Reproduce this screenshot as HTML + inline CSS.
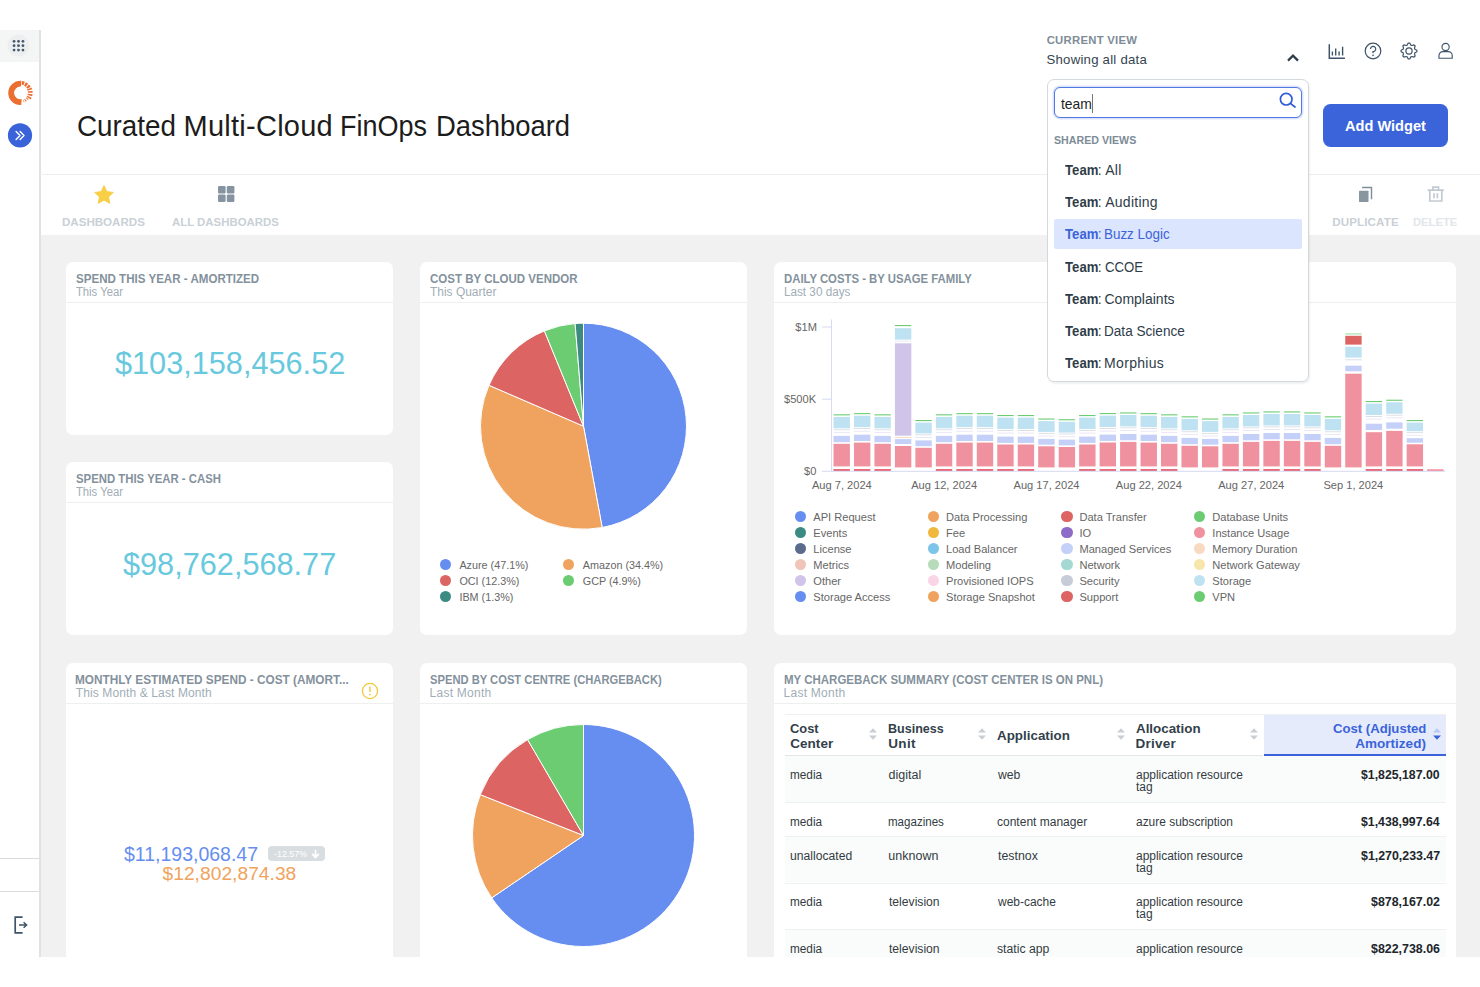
<!DOCTYPE html>
<html><head><meta charset="utf-8"><title>Curated Multi-Cloud FinOps Dashboard</title><style>
html,body{margin:0;padding:0;background:#fff;}
body{width:1480px;height:987px;position:relative;overflow:hidden;font-family:"Liberation Sans",sans-serif;}
.t{position:absolute;white-space:nowrap;display:block;transform-origin:0 0;}
.b{position:absolute;box-sizing:border-box;}
svg{position:absolute;overflow:visible;}
.card{position:absolute;background:#fff;border-radius:6px;box-sizing:border-box;}
</style></head><body>
<div class="b" style="left:0px;top:30px;width:1480px;height:927px;background:#fff;"></div>
<div class="b" style="left:40px;top:235.2px;width:1440px;height:721.8px;background:#f1f1f1;"></div>
<div class="b" style="left:0px;top:30px;width:39px;height:32px;background:#f4f5f5;"></div>
<div class="b" style="left:39.1px;top:30px;width:1.6px;height:927px;background:#e1e1e1;"></div>
<div class="b" style="left:0px;top:858px;width:39px;height:1px;background:#dcdcdc;"></div>
<div class="b" style="left:0px;top:891px;width:39px;height:1px;background:#dcdcdc;"></div>
<div class="b" style="left:40px;top:174px;width:1440px;height:1px;background:#eeeeee;"></div>
<svg style="left:7.35px;top:33.9px" width="23" height="23" viewBox="0 0 23 23"><circle cx="11.5" cy="11.5" r="11" fill="#eceeef"/><circle cx="7.05" cy="7.30" r="1.4" fill="#44596d"/><circle cx="7.05" cy="11.70" r="1.4" fill="#44596d"/><circle cx="7.05" cy="16.10" r="1.4" fill="#44596d"/><circle cx="11.50" cy="7.30" r="1.4" fill="#44596d"/><circle cx="11.50" cy="11.70" r="1.4" fill="#44596d"/><circle cx="11.50" cy="16.10" r="1.4" fill="#44596d"/><circle cx="15.95" cy="7.30" r="1.4" fill="#44596d"/><circle cx="15.95" cy="11.70" r="1.4" fill="#44596d"/><circle cx="15.95" cy="16.10" r="1.4" fill="#44596d"/></svg>
<svg style="left:8.0px;top:80.0px" width="26" height="26" viewBox="0 0 26 26"><path d="M13.19 24.97 A12.1 12.1 0 1 1 13.40 0.85 L12.90 6.62 A6.3 6.3 0 1 0 13.77 19.04 Z" fill="#ea6f31"/><path d="M13.93 2.92 A10.1 10.1 0 0 1 21.27 8.16" fill="none" stroke="#ea6f31" stroke-width="3.9" stroke-dasharray="2.3 0.9"/><path d="M21.25 8.56 A9.9 9.9 0 0 1 20.75 18.15" fill="none" stroke="#ea6f31" stroke-width="4.8" stroke-dasharray="1.5 1.3"/><path d="M19.55 18.13 A8.9 8.9 0 0 1 15.39 21.26" fill="none" stroke="#ea6f31" stroke-width="2.8" stroke-dasharray="1.2 1.1" opacity="0.85"/></svg>
<svg style="left:8.1px;top:122.5px" width="24" height="24.5" viewBox="0 0 24 24.5"><circle cx="12" cy="12.4" r="12.1" fill="#3b63d9"/><path d="M8.1 8.5 L12 12.45 L8.1 16.4 M12.1 8.5 L16 12.45 L12.1 16.4" fill="none" stroke="#fff" stroke-width="1.4" stroke-linecap="round" stroke-linejoin="round"/></svg>
<svg style="left:13.5px;top:915.7px" width="15" height="18" viewBox="0 0 15 18"><path d="M8.6 1.2 H1.2 V16.8 H8.6" fill="none" stroke="#3f5468" stroke-width="1.7"/><path d="M5 9 H12.4 M9.6 6.2 L12.6 9 L9.6 11.8" fill="none" stroke="#3f5468" stroke-width="1.5"/></svg>
<span class="t" style="left:77.31px;top:112.00px;font-size:29px;line-height:29px;color:#1c1c1c;transform:scaleX(0.9589);">Curated</span>
<span class="t" style="left:183.58px;top:112.00px;font-size:29px;line-height:29px;color:#1c1c1c;letter-spacing:0.247px;">Multi-Cloud</span>
<span class="t" style="left:340.44px;top:112.00px;font-size:29px;line-height:29px;color:#1c1c1c;transform:scaleX(0.9314);">FinOps</span>
<span class="t" style="left:436.31px;top:112.00px;font-size:29px;line-height:29px;color:#1c1c1c;transform:scaleX(0.9452);">Dashboard</span>
<span class="t" style="left:1046.65px;top:35.00px;font-size:11.3px;line-height:11.3px;color:#7d8c97;font-weight:700;letter-spacing:0.287px;">CURRENT VIEW</span>
<span class="t" style="left:1046.51px;top:53.00px;font-size:13.2px;line-height:13.2px;color:#34444f;letter-spacing:0.234px;">Showing all data</span>
<svg style="left:1285.8px;top:53.2px" width="14" height="10" viewBox="0 0 14 10"><path d="M2 7.6 L7 2.6 L12 7.6" fill="none" stroke="#2f3e4a" stroke-width="2.2"/></svg>
<svg style="left:1327px;top:42px" width="20" height="20" viewBox="0 0 20 20"><path d="M2.3 2.3 V16.2 H17.9" fill="none" stroke="#3f5468" stroke-width="1.5"/><path d="M5.4 9.4 V13.4 M8.7 6.4 V13.4 M12.1 9.4 V13.4 M15.6 4.8 V13.4" stroke="#3f5468" stroke-width="1.4" fill="none"/></svg>
<svg style="left:1364.1px;top:42.3px" width="18" height="18" viewBox="0 0 18 18"><circle cx="9" cy="9" r="7.8" fill="none" stroke="#3f5468" stroke-width="1.2"/><path d="M6.5 7 A2.6 2.6 0 1 1 9 9.6 V11.2" fill="none" stroke="#3f5468" stroke-width="1.2"/><circle cx="9" cy="13.4" r="0.8" fill="#3f5468"/></svg>
<svg style="left:1400.4px;top:42.1px" width="18" height="18" viewBox="0 0 18 18"><path d="M16.91,8.22 L16.91,9.78 L14.93,10.80 L14.47,11.92 L15.15,14.04 L14.04,15.15 L11.92,14.47 L10.80,14.93 L9.78,16.91 L8.22,16.91 L7.20,14.93 L6.08,14.47 L3.96,15.15 L2.85,14.04 L3.53,11.92 L3.07,10.80 L1.09,9.78 L1.09,8.22 L3.07,7.20 L3.53,6.08 L2.85,3.96 L3.96,2.85 L6.08,3.53 L7.20,3.07 L8.22,1.09 L9.78,1.09 L10.80,3.07 L11.92,3.53 L14.04,2.85 L15.15,3.96 L14.47,6.08 L14.93,7.20Z" fill="none" stroke="#3f5468" stroke-width="1.2" stroke-linejoin="round"/><circle cx="9" cy="9" r="3.1" fill="none" stroke="#3f5468" stroke-width="1.2"/></svg>
<svg style="left:1437.7px;top:42.2px" width="15.2" height="17.6" viewBox="0 0 16 18"><circle cx="8" cy="5" r="3.8" fill="none" stroke="#3f5468" stroke-width="1.2"/><path d="M1 16.8 V14.2 C1 11.4 3.2 9.8 5 9.8 H11 C12.8 9.8 15 11.4 15 14.2 V16.8 Z" fill="none" stroke="#3f5468" stroke-width="1.2" stroke-linejoin="round"/></svg>
<div class="b" style="left:1323px;top:103.8px;width:125px;height:43px;background:#3c64da;border-radius:7.5px;"></div>
<span class="t" style="left:1344.74px;top:118.00px;font-size:15.5px;line-height:15.5px;color:#fff;font-weight:700;transform:scaleX(0.9405);">Add Widget</span>
<svg style="left:94px;top:185px" width="20" height="19" viewBox="0 0 20 19"><path d="M10 0.6 L12.9 6.6 L19.4 7.4 L14.6 11.9 L15.9 18.4 L10 15.2 L4.1 18.4 L5.4 11.9 L0.6 7.4 L7.1 6.6 Z" fill="#f7ce45" stroke="#f7ce45" stroke-width="0.8" stroke-linejoin="round"/></svg>
<svg style="left:217.9px;top:186px" width="17" height="16" viewBox="0 0 17 16"><rect x="0" y="0" width="7.6" height="7.4" rx="1.2" fill="#8594a0"/><rect x="8.8" y="0" width="7.6" height="7.4" rx="1.2" fill="#8594a0"/><rect x="0" y="8.6" width="7.6" height="7.4" rx="1.2" fill="#8594a0"/><rect x="8.8" y="8.6" width="7.6" height="7.4" rx="1.2" fill="#8594a0"/></svg>
<span class="t" style="left:62.05px;top:216.00px;font-size:11.6px;line-height:11.6px;color:#c9d0d6;font-weight:700;transform:scaleX(0.9969);">DASHBOARDS</span>
<span class="t" style="left:172.31px;top:216.00px;font-size:11.6px;line-height:11.6px;color:#c9d0d6;font-weight:700;transform:scaleX(0.9834);">ALL DASHBOARDS</span>
<svg style="left:1358px;top:186px" width="16" height="17" viewBox="0 0 16 17"><path d="M4.1 1.5 H13.5 V13.2" fill="none" stroke="#7f8e99" stroke-width="1.4"/><rect x="1" y="4.7" width="9.5" height="11.2" rx="0.6" fill="#8896a0"/></svg>
<span class="t" style="left:1332.15px;top:216.00px;font-size:11.6px;line-height:11.6px;color:#c9d0d6;font-weight:700;letter-spacing:0.135px;">DUPLICATE</span>
<svg style="left:1427px;top:186px" width="18" height="17" viewBox="0 0 18 17"><path d="M0.6 4.1 H16.8 M5.9 3.4 V1.2 H11.5 V3.4 M2.8 4.6 V15 H14.8 V4.6 M7 7.2 V12.2 M10.4 7.2 V12.2" fill="none" stroke="#c2cad1" stroke-width="1.7"/></svg>
<span class="t" style="left:1413.47px;top:216.00px;font-size:11.6px;line-height:11.6px;color:#e2e6e9;font-weight:700;transform:scaleX(0.9663);">DELETE</span>
<div class="card" style="left:65.5px;top:262px;width:327px;height:172.8px;border-radius:7px;"></div>
<span class="t" style="left:75.71px;top:273.00px;font-size:12.3px;line-height:12.3px;color:#83919c;font-weight:700;transform:scaleX(0.9406);">SPEND THIS YEAR - AMORTIZED</span>
<span class="t" style="left:75.78px;top:286.00px;font-size:12px;line-height:12px;color:#a1adb6;transform:scaleX(0.9371);">This Year</span>
<div class="b" style="left:65.5px;top:302.3px;width:327px;height:1px;background:#eef0f0;"></div>
<span class="t" style="left:114.84px;top:348.00px;font-size:31px;line-height:31px;color:#68c9de;transform:scaleX(0.9894);">$103,158,456.52</span>
<div class="card" style="left:65.5px;top:462px;width:327px;height:173px;border-radius:7px;"></div>
<span class="t" style="left:75.72px;top:473.00px;font-size:12.3px;line-height:12.3px;color:#83919c;font-weight:700;transform:scaleX(0.9240);">SPEND THIS YEAR - CASH</span>
<span class="t" style="left:75.78px;top:486.00px;font-size:12px;line-height:12px;color:#a1adb6;transform:scaleX(0.9371);">This Year</span>
<div class="b" style="left:65.5px;top:502.3px;width:327px;height:1px;background:#eef0f0;"></div>
<span class="t" style="left:123.24px;top:549.00px;font-size:31px;line-height:31px;color:#68c9de;transform:scaleX(0.9895);">$98,762,568.77</span>
<div class="card" style="left:420px;top:262px;width:327px;height:373px;border-radius:7px;"></div>
<span class="t" style="left:430.04px;top:273.00px;font-size:12.3px;line-height:12.3px;color:#83919c;font-weight:700;transform:scaleX(0.9366);">COST BY CLOUD VENDOR</span>
<span class="t" style="left:430.26px;top:286.00px;font-size:12px;line-height:12px;color:#a1adb6;transform:scaleX(0.9955);">This Quarter</span>
<div class="b" style="left:420px;top:302.3px;width:327px;height:1px;background:#eef0f0;"></div>
<svg style="left:0;top:0" width="1480" height="987"><path d="M583.5,426.2 L583.50,323.20 A103,103 0 0 1 602.16,527.49 Z" fill="#668ef0" stroke="#fff" stroke-width="1" stroke-linejoin="round"/><path d="M583.5,426.2 L602.16,527.49 A103,103 0 0 1 488.97,385.29 Z" fill="#f0a35e" stroke="#fff" stroke-width="1" stroke-linejoin="round"/><path d="M583.5,426.2 L488.97,385.29 A103,103 0 0 1 544.38,330.92 Z" fill="#dc6463" stroke="#fff" stroke-width="1" stroke-linejoin="round"/><path d="M583.5,426.2 L544.38,330.92 A103,103 0 0 1 575.10,323.54 Z" fill="#6ccc72" stroke="#fff" stroke-width="1" stroke-linejoin="round"/><path d="M583.5,426.2 L575.10,323.54 A103,103 0 0 1 583.50,323.20 Z" fill="#3c8b83" stroke="#fff" stroke-width="1" stroke-linejoin="round"/></svg>
<div class="b" style="left:440.10px;top:559.10px;width:11.2px;height:11.2px;border-radius:50%;background:#668ef0;"></div>
<span class="t" style="left:459.40px;top:560.00px;font-size:10.8px;line-height:10.8px;color:#666;">Azure (47.1%)</span>
<div class="b" style="left:440.10px;top:575.10px;width:11.2px;height:11.2px;border-radius:50%;background:#dc6463;"></div>
<span class="t" style="left:459.40px;top:576.00px;font-size:10.8px;line-height:10.8px;color:#666;">OCI (12.3%)</span>
<div class="b" style="left:440.10px;top:591.10px;width:11.2px;height:11.2px;border-radius:50%;background:#3c8b83;"></div>
<span class="t" style="left:459.40px;top:592.00px;font-size:10.8px;line-height:10.8px;color:#666;">IBM (1.3%)</span>
<div class="b" style="left:563.20px;top:559.10px;width:11.2px;height:11.2px;border-radius:50%;background:#f0a35e;"></div>
<span class="t" style="left:582.80px;top:560.00px;font-size:10.8px;line-height:10.8px;color:#666;">Amazon (34.4%)</span>
<div class="b" style="left:563.20px;top:575.10px;width:11.2px;height:11.2px;border-radius:50%;background:#6ccc72;"></div>
<span class="t" style="left:582.80px;top:576.00px;font-size:10.8px;line-height:10.8px;color:#666;">GCP (4.9%)</span>
<div class="card" style="left:774px;top:262px;width:682px;height:373px;border-radius:7px;"></div>
<span class="t" style="left:783.76px;top:273.00px;font-size:12.3px;line-height:12.3px;color:#83919c;font-weight:700;transform:scaleX(0.9222);">DAILY COSTS - BY USAGE FAMILY</span>
<span class="t" style="left:783.56px;top:286.00px;font-size:12px;line-height:12px;color:#a1adb6;transform:scaleX(0.9751);">Last 30 days</span>
<div class="b" style="left:774px;top:302.3px;width:682px;height:1px;background:#eef0f0;"></div>
<svg style="left:0;top:0" width="1480" height="987"><path d="M831.5 319.5 V471.3 H1445" fill="none" stroke="#d6daf2" stroke-width="1"/><path d="M822 327.0 H831.5" stroke="#d6daf2" stroke-width="1"/><path d="M822 399.2 H831.5" stroke="#d6daf2" stroke-width="1"/><path d="M822 471.3 H831.5" stroke="#d6daf2" stroke-width="1"/><rect x="833.50" y="469.00" width="16.4" height="1.90" fill="#e46a7c"/><rect x="833.50" y="443.80" width="16.4" height="22.60" fill="#f0919f"/><rect x="833.50" y="435.90" width="16.4" height="6.30" fill="#c5d0f8"/><rect x="833.50" y="429.30" width="16.4" height="0.90" fill="#d9dde4"/><rect x="833.50" y="431.90" width="16.4" height="1.00" fill="#ebe6f5"/><rect x="833.50" y="416.90" width="16.4" height="11.40" fill="#bfe2f2"/><rect x="833.50" y="414.30" width="16.4" height="1.10" fill="#6ccc72"/><rect x="853.97" y="469.00" width="16.4" height="1.90" fill="#e46a7c"/><rect x="853.97" y="442.60" width="16.4" height="23.80" fill="#f0919f"/><rect x="853.97" y="434.70" width="16.4" height="6.30" fill="#c5d0f8"/><rect x="853.97" y="428.10" width="16.4" height="0.90" fill="#d9dde4"/><rect x="853.97" y="430.70" width="16.4" height="1.00" fill="#ebe6f5"/><rect x="853.97" y="415.70" width="16.4" height="11.40" fill="#bfe2f2"/><rect x="853.97" y="413.10" width="16.4" height="1.10" fill="#6ccc72"/><rect x="874.44" y="469.00" width="16.4" height="1.90" fill="#e46a7c"/><rect x="874.44" y="443.80" width="16.4" height="22.60" fill="#f0919f"/><rect x="874.44" y="435.90" width="16.4" height="6.30" fill="#c5d0f8"/><rect x="874.44" y="429.30" width="16.4" height="0.90" fill="#d9dde4"/><rect x="874.44" y="431.90" width="16.4" height="1.00" fill="#ebe6f5"/><rect x="874.44" y="416.90" width="16.4" height="11.40" fill="#bfe2f2"/><rect x="874.44" y="414.30" width="16.4" height="1.10" fill="#6ccc72"/><rect x="894.91" y="446.00" width="16.4" height="21.40" fill="#f0919f"/><rect x="894.91" y="439.10" width="16.4" height="4.90" fill="#c5d0f8"/><rect x="894.91" y="437.20" width="16.4" height="0.70" fill="#f6cfa8"/><rect x="894.91" y="343.30" width="16.4" height="92.40" fill="#d1c4e9"/><rect x="894.91" y="340.60" width="16.4" height="1.00" fill="#e8ecf2"/><rect x="894.91" y="328.20" width="16.4" height="11.40" fill="#bfe2f2"/><rect x="894.91" y="325.00" width="16.4" height="1.10" fill="#6ccc72"/><rect x="915.38" y="447.80" width="16.4" height="19.60" fill="#f0919f"/><rect x="915.38" y="440.40" width="16.4" height="5.80" fill="#c5d0f8"/><rect x="915.38" y="434.40" width="16.4" height="0.90" fill="#d9dde4"/><rect x="915.38" y="437.00" width="16.4" height="1.00" fill="#ebe6f5"/><rect x="915.38" y="422.60" width="16.4" height="10.80" fill="#bfe2f2"/><rect x="915.38" y="420.00" width="16.4" height="1.10" fill="#6ccc72"/><rect x="935.85" y="469.00" width="16.4" height="1.90" fill="#e46a7c"/><rect x="935.85" y="443.80" width="16.4" height="22.60" fill="#f0919f"/><rect x="935.85" y="435.90" width="16.4" height="6.30" fill="#c5d0f8"/><rect x="935.85" y="429.30" width="16.4" height="0.90" fill="#d9dde4"/><rect x="935.85" y="431.90" width="16.4" height="1.00" fill="#ebe6f5"/><rect x="935.85" y="416.90" width="16.4" height="11.40" fill="#bfe2f2"/><rect x="935.85" y="414.30" width="16.4" height="1.10" fill="#6ccc72"/><rect x="956.32" y="469.00" width="16.4" height="1.90" fill="#e46a7c"/><rect x="956.32" y="442.60" width="16.4" height="23.80" fill="#f0919f"/><rect x="956.32" y="434.70" width="16.4" height="6.30" fill="#c5d0f8"/><rect x="956.32" y="428.10" width="16.4" height="0.90" fill="#d9dde4"/><rect x="956.32" y="430.70" width="16.4" height="1.00" fill="#ebe6f5"/><rect x="956.32" y="415.70" width="16.4" height="11.40" fill="#bfe2f2"/><rect x="956.32" y="413.10" width="16.4" height="1.10" fill="#6ccc72"/><rect x="976.79" y="469.00" width="16.4" height="1.90" fill="#e46a7c"/><rect x="976.79" y="442.60" width="16.4" height="23.80" fill="#f0919f"/><rect x="976.79" y="434.70" width="16.4" height="6.30" fill="#c5d0f8"/><rect x="976.79" y="428.10" width="16.4" height="0.90" fill="#d9dde4"/><rect x="976.79" y="430.70" width="16.4" height="1.00" fill="#ebe6f5"/><rect x="976.79" y="415.70" width="16.4" height="11.40" fill="#bfe2f2"/><rect x="976.79" y="413.10" width="16.4" height="1.10" fill="#6ccc72"/><rect x="997.26" y="469.00" width="16.4" height="1.90" fill="#e46a7c"/><rect x="997.26" y="444.50" width="16.4" height="21.90" fill="#f0919f"/><rect x="997.26" y="436.60" width="16.4" height="6.30" fill="#c5d0f8"/><rect x="997.26" y="430.00" width="16.4" height="0.90" fill="#d9dde4"/><rect x="997.26" y="432.60" width="16.4" height="1.00" fill="#ebe6f5"/><rect x="997.26" y="417.60" width="16.4" height="11.40" fill="#bfe2f2"/><rect x="997.26" y="415.00" width="16.4" height="1.10" fill="#6ccc72"/><rect x="1017.73" y="469.00" width="16.4" height="1.90" fill="#e46a7c"/><rect x="1017.73" y="444.50" width="16.4" height="21.90" fill="#f0919f"/><rect x="1017.73" y="436.60" width="16.4" height="6.30" fill="#c5d0f8"/><rect x="1017.73" y="430.00" width="16.4" height="0.90" fill="#d9dde4"/><rect x="1017.73" y="432.60" width="16.4" height="1.00" fill="#ebe6f5"/><rect x="1017.73" y="417.60" width="16.4" height="11.40" fill="#bfe2f2"/><rect x="1017.73" y="415.00" width="16.4" height="1.10" fill="#6ccc72"/><rect x="1038.20" y="446.30" width="16.4" height="21.10" fill="#f0919f"/><rect x="1038.20" y="438.90" width="16.4" height="5.80" fill="#c5d0f8"/><rect x="1038.20" y="432.90" width="16.4" height="0.90" fill="#d9dde4"/><rect x="1038.20" y="435.50" width="16.4" height="1.00" fill="#ebe6f5"/><rect x="1038.20" y="421.10" width="16.4" height="10.80" fill="#bfe2f2"/><rect x="1038.20" y="418.50" width="16.4" height="1.10" fill="#6ccc72"/><rect x="1058.67" y="447.00" width="16.4" height="20.40" fill="#f0919f"/><rect x="1058.67" y="439.60" width="16.4" height="5.80" fill="#c5d0f8"/><rect x="1058.67" y="433.60" width="16.4" height="0.90" fill="#d9dde4"/><rect x="1058.67" y="436.20" width="16.4" height="1.00" fill="#ebe6f5"/><rect x="1058.67" y="421.80" width="16.4" height="10.80" fill="#bfe2f2"/><rect x="1058.67" y="419.20" width="16.4" height="1.10" fill="#6ccc72"/><rect x="1079.14" y="469.00" width="16.4" height="1.90" fill="#e46a7c"/><rect x="1079.14" y="444.50" width="16.4" height="21.90" fill="#f0919f"/><rect x="1079.14" y="436.60" width="16.4" height="6.30" fill="#c5d0f8"/><rect x="1079.14" y="430.00" width="16.4" height="0.90" fill="#d9dde4"/><rect x="1079.14" y="432.60" width="16.4" height="1.00" fill="#ebe6f5"/><rect x="1079.14" y="417.60" width="16.4" height="11.40" fill="#bfe2f2"/><rect x="1079.14" y="415.00" width="16.4" height="1.10" fill="#6ccc72"/><rect x="1099.61" y="469.00" width="16.4" height="1.90" fill="#e46a7c"/><rect x="1099.61" y="442.50" width="16.4" height="23.90" fill="#f0919f"/><rect x="1099.61" y="434.60" width="16.4" height="6.30" fill="#c5d0f8"/><rect x="1099.61" y="428.00" width="16.4" height="0.90" fill="#d9dde4"/><rect x="1099.61" y="430.60" width="16.4" height="1.00" fill="#ebe6f5"/><rect x="1099.61" y="415.60" width="16.4" height="11.40" fill="#bfe2f2"/><rect x="1099.61" y="413.00" width="16.4" height="1.10" fill="#6ccc72"/><rect x="1120.08" y="469.00" width="16.4" height="1.90" fill="#e46a7c"/><rect x="1120.08" y="441.90" width="16.4" height="24.50" fill="#f0919f"/><rect x="1120.08" y="434.00" width="16.4" height="6.30" fill="#c5d0f8"/><rect x="1120.08" y="427.40" width="16.4" height="0.90" fill="#d9dde4"/><rect x="1120.08" y="430.00" width="16.4" height="1.00" fill="#ebe6f5"/><rect x="1120.08" y="415.00" width="16.4" height="11.40" fill="#bfe2f2"/><rect x="1120.08" y="412.40" width="16.4" height="1.10" fill="#6ccc72"/><rect x="1140.55" y="469.00" width="16.4" height="1.90" fill="#e46a7c"/><rect x="1140.55" y="442.60" width="16.4" height="23.80" fill="#f0919f"/><rect x="1140.55" y="434.70" width="16.4" height="6.30" fill="#c5d0f8"/><rect x="1140.55" y="428.10" width="16.4" height="0.90" fill="#d9dde4"/><rect x="1140.55" y="430.70" width="16.4" height="1.00" fill="#ebe6f5"/><rect x="1140.55" y="415.70" width="16.4" height="11.40" fill="#bfe2f2"/><rect x="1140.55" y="413.10" width="16.4" height="1.10" fill="#6ccc72"/><rect x="1161.02" y="469.00" width="16.4" height="1.90" fill="#e46a7c"/><rect x="1161.02" y="443.80" width="16.4" height="22.60" fill="#f0919f"/><rect x="1161.02" y="435.90" width="16.4" height="6.30" fill="#c5d0f8"/><rect x="1161.02" y="429.30" width="16.4" height="0.90" fill="#d9dde4"/><rect x="1161.02" y="431.90" width="16.4" height="1.00" fill="#ebe6f5"/><rect x="1161.02" y="416.90" width="16.4" height="11.40" fill="#bfe2f2"/><rect x="1161.02" y="414.30" width="16.4" height="1.10" fill="#6ccc72"/><rect x="1181.49" y="445.80" width="16.4" height="21.60" fill="#f0919f"/><rect x="1181.49" y="437.90" width="16.4" height="6.30" fill="#c5d0f8"/><rect x="1181.49" y="431.30" width="16.4" height="0.90" fill="#d9dde4"/><rect x="1181.49" y="433.90" width="16.4" height="1.00" fill="#ebe6f5"/><rect x="1181.49" y="418.90" width="16.4" height="11.40" fill="#bfe2f2"/><rect x="1181.49" y="416.30" width="16.4" height="1.10" fill="#6ccc72"/><rect x="1201.96" y="446.30" width="16.4" height="21.10" fill="#f0919f"/><rect x="1201.96" y="438.90" width="16.4" height="5.80" fill="#c5d0f8"/><rect x="1201.96" y="432.90" width="16.4" height="0.90" fill="#d9dde4"/><rect x="1201.96" y="435.50" width="16.4" height="1.00" fill="#ebe6f5"/><rect x="1201.96" y="421.10" width="16.4" height="10.80" fill="#bfe2f2"/><rect x="1201.96" y="418.50" width="16.4" height="1.10" fill="#6ccc72"/><rect x="1222.43" y="469.00" width="16.4" height="1.90" fill="#e46a7c"/><rect x="1222.43" y="443.80" width="16.4" height="22.60" fill="#f0919f"/><rect x="1222.43" y="435.90" width="16.4" height="6.30" fill="#c5d0f8"/><rect x="1222.43" y="429.30" width="16.4" height="0.90" fill="#d9dde4"/><rect x="1222.43" y="431.90" width="16.4" height="1.00" fill="#ebe6f5"/><rect x="1222.43" y="416.90" width="16.4" height="11.40" fill="#bfe2f2"/><rect x="1222.43" y="414.30" width="16.4" height="1.10" fill="#6ccc72"/><rect x="1242.90" y="469.00" width="16.4" height="1.90" fill="#e46a7c"/><rect x="1242.90" y="441.90" width="16.4" height="24.50" fill="#f0919f"/><rect x="1242.90" y="434.00" width="16.4" height="6.30" fill="#c5d0f8"/><rect x="1242.90" y="427.40" width="16.4" height="0.90" fill="#d9dde4"/><rect x="1242.90" y="430.00" width="16.4" height="1.00" fill="#ebe6f5"/><rect x="1242.90" y="415.00" width="16.4" height="11.40" fill="#bfe2f2"/><rect x="1242.90" y="412.40" width="16.4" height="1.10" fill="#6ccc72"/><rect x="1263.37" y="469.00" width="16.4" height="1.90" fill="#e46a7c"/><rect x="1263.37" y="440.90" width="16.4" height="25.50" fill="#f0919f"/><rect x="1263.37" y="433.00" width="16.4" height="6.30" fill="#c5d0f8"/><rect x="1263.37" y="426.40" width="16.4" height="0.90" fill="#d9dde4"/><rect x="1263.37" y="429.00" width="16.4" height="1.00" fill="#ebe6f5"/><rect x="1263.37" y="414.00" width="16.4" height="11.40" fill="#bfe2f2"/><rect x="1263.37" y="411.40" width="16.4" height="1.10" fill="#6ccc72"/><rect x="1283.84" y="469.00" width="16.4" height="1.90" fill="#e46a7c"/><rect x="1283.84" y="440.90" width="16.4" height="25.50" fill="#f0919f"/><rect x="1283.84" y="433.00" width="16.4" height="6.30" fill="#c5d0f8"/><rect x="1283.84" y="426.40" width="16.4" height="0.90" fill="#d9dde4"/><rect x="1283.84" y="429.00" width="16.4" height="1.00" fill="#ebe6f5"/><rect x="1283.84" y="414.00" width="16.4" height="11.40" fill="#bfe2f2"/><rect x="1283.84" y="411.40" width="16.4" height="1.10" fill="#6ccc72"/><rect x="1304.31" y="469.00" width="16.4" height="1.90" fill="#e46a7c"/><rect x="1304.31" y="441.90" width="16.4" height="24.50" fill="#f0919f"/><rect x="1304.31" y="434.00" width="16.4" height="6.30" fill="#c5d0f8"/><rect x="1304.31" y="427.40" width="16.4" height="0.90" fill="#d9dde4"/><rect x="1304.31" y="430.00" width="16.4" height="1.00" fill="#ebe6f5"/><rect x="1304.31" y="415.00" width="16.4" height="11.40" fill="#bfe2f2"/><rect x="1304.31" y="412.40" width="16.4" height="1.10" fill="#6ccc72"/><rect x="1324.78" y="445.80" width="16.4" height="21.60" fill="#f0919f"/><rect x="1324.78" y="437.90" width="16.4" height="6.30" fill="#c5d0f8"/><rect x="1324.78" y="431.30" width="16.4" height="0.90" fill="#d9dde4"/><rect x="1324.78" y="433.90" width="16.4" height="1.00" fill="#ebe6f5"/><rect x="1324.78" y="418.90" width="16.4" height="11.40" fill="#bfe2f2"/><rect x="1324.78" y="416.30" width="16.4" height="1.10" fill="#6ccc72"/><rect x="1345.25" y="373.70" width="16.4" height="93.70" fill="#f0919f"/><rect x="1345.25" y="365.70" width="16.4" height="5.60" fill="#c5d0f8"/><rect x="1345.25" y="359.10" width="16.4" height="1.30" fill="#e3e6ee"/><rect x="1345.25" y="346.70" width="16.4" height="10.90" fill="#bfe2f2"/><rect x="1345.25" y="335.80" width="16.4" height="8.80" fill="#dc6463"/><rect x="1345.25" y="333.30" width="16.4" height="1.20" fill="#a5e2a8"/><rect x="1365.72" y="469.00" width="16.4" height="1.90" fill="#e46a7c"/><rect x="1365.72" y="432.20" width="16.4" height="34.20" fill="#f0919f"/><rect x="1365.72" y="423.70" width="16.4" height="6.30" fill="#c5d0f8"/><rect x="1365.72" y="416.00" width="16.4" height="0.90" fill="#d9dde4"/><rect x="1365.72" y="418.60" width="16.4" height="1.00" fill="#ebe6f5"/><rect x="1365.72" y="403.60" width="16.4" height="11.40" fill="#bfe2f2"/><rect x="1365.72" y="401.00" width="16.4" height="1.10" fill="#6ccc72"/><rect x="1386.19" y="469.00" width="16.4" height="1.90" fill="#e46a7c"/><rect x="1386.19" y="430.90" width="16.4" height="35.50" fill="#f0919f"/><rect x="1386.19" y="422.40" width="16.4" height="6.30" fill="#c5d0f8"/><rect x="1386.19" y="414.70" width="16.4" height="0.90" fill="#d9dde4"/><rect x="1386.19" y="417.30" width="16.4" height="1.00" fill="#ebe6f5"/><rect x="1386.19" y="402.30" width="16.4" height="11.40" fill="#bfe2f2"/><rect x="1386.19" y="399.70" width="16.4" height="1.10" fill="#6ccc72"/><rect x="1406.66" y="469.00" width="16.4" height="1.90" fill="#e46a7c"/><rect x="1406.66" y="444.30" width="16.4" height="22.10" fill="#f0919f"/><rect x="1406.66" y="438.20" width="16.4" height="4.50" fill="#c5d0f8"/><rect x="1406.66" y="432.20" width="16.4" height="0.90" fill="#d9dde4"/><rect x="1406.66" y="434.80" width="16.4" height="1.00" fill="#ebe6f5"/><rect x="1406.66" y="422.60" width="16.4" height="8.60" fill="#bfe2f2"/><rect x="1406.66" y="420.00" width="16.4" height="1.10" fill="#6ccc72"/><rect x="1427.13" y="469.20" width="16.4" height="1.80" fill="#f29aa8"/></svg>
<span class="t" style="left:795.30px;top:322.00px;font-size:11.1px;line-height:11.1px;color:#666;">$1M</span>
<span class="t" style="left:783.98px;top:394.00px;font-size:11.1px;line-height:11.1px;color:#666;">$500K</span>
<span class="t" style="left:804.07px;top:466.00px;font-size:11.1px;line-height:11.1px;color:#666;">$0</span>
<span class="t" style="left:811.90px;top:480.00px;font-size:11.1px;line-height:11.1px;color:#666;">Aug 7, 2024</span>
<span class="t" style="left:911.17px;top:480.00px;font-size:11.1px;line-height:11.1px;color:#666;">Aug 12, 2024</span>
<span class="t" style="left:1013.52px;top:480.00px;font-size:11.1px;line-height:11.1px;color:#666;">Aug 17, 2024</span>
<span class="t" style="left:1115.87px;top:480.00px;font-size:11.1px;line-height:11.1px;color:#666;">Aug 22, 2024</span>
<span class="t" style="left:1218.22px;top:480.00px;font-size:11.1px;line-height:11.1px;color:#666;">Aug 27, 2024</span>
<span class="t" style="left:1323.40px;top:480.00px;font-size:11.1px;line-height:11.1px;color:#666;">Sep 1, 2024</span>
<div class="b" style="left:794.90px;top:510.80px;width:11.2px;height:11.2px;border-radius:50%;background:#668ef0;"></div>
<span class="t" style="left:813.30px;top:512.00px;font-size:11.1px;line-height:11.1px;color:#666;">API Request</span>
<div class="b" style="left:794.90px;top:526.90px;width:11.2px;height:11.2px;border-radius:50%;background:#3c8b83;"></div>
<span class="t" style="left:813.30px;top:528.00px;font-size:11.1px;line-height:11.1px;color:#666;">Events</span>
<div class="b" style="left:794.90px;top:543.00px;width:11.2px;height:11.2px;border-radius:50%;background:#5c6b8c;"></div>
<span class="t" style="left:813.30px;top:544.00px;font-size:11.1px;line-height:11.1px;color:#666;">License</span>
<div class="b" style="left:794.90px;top:559.10px;width:11.2px;height:11.2px;border-radius:50%;background:#f0c5b8;"></div>
<span class="t" style="left:813.30px;top:560.00px;font-size:11.1px;line-height:11.1px;color:#666;">Metrics</span>
<div class="b" style="left:794.90px;top:575.20px;width:11.2px;height:11.2px;border-radius:50%;background:#d1c4e9;"></div>
<span class="t" style="left:813.30px;top:576.00px;font-size:11.1px;line-height:11.1px;color:#666;">Other</span>
<div class="b" style="left:794.90px;top:591.30px;width:11.2px;height:11.2px;border-radius:50%;background:#668ef0;"></div>
<span class="t" style="left:813.30px;top:592.00px;font-size:11.1px;line-height:11.1px;color:#666;">Storage Access</span>
<div class="b" style="left:928.00px;top:510.80px;width:11.2px;height:11.2px;border-radius:50%;background:#f0a35e;"></div>
<span class="t" style="left:946.00px;top:512.00px;font-size:11.1px;line-height:11.1px;color:#666;">Data Processing</span>
<div class="b" style="left:928.00px;top:526.90px;width:11.2px;height:11.2px;border-radius:50%;background:#f1b83e;"></div>
<span class="t" style="left:946.00px;top:528.00px;font-size:11.1px;line-height:11.1px;color:#666;">Fee</span>
<div class="b" style="left:928.00px;top:543.00px;width:11.2px;height:11.2px;border-radius:50%;background:#7cc4ea;"></div>
<span class="t" style="left:946.00px;top:544.00px;font-size:11.1px;line-height:11.1px;color:#666;">Load Balancer</span>
<div class="b" style="left:928.00px;top:559.10px;width:11.2px;height:11.2px;border-radius:50%;background:#b7dcb9;"></div>
<span class="t" style="left:946.00px;top:560.00px;font-size:11.1px;line-height:11.1px;color:#666;">Modeling</span>
<div class="b" style="left:928.00px;top:575.20px;width:11.2px;height:11.2px;border-radius:50%;background:#fad5e5;"></div>
<span class="t" style="left:946.00px;top:576.00px;font-size:11.1px;line-height:11.1px;color:#666;">Provisioned IOPS</span>
<div class="b" style="left:928.00px;top:591.30px;width:11.2px;height:11.2px;border-radius:50%;background:#f0a35e;"></div>
<span class="t" style="left:946.00px;top:592.00px;font-size:11.1px;line-height:11.1px;color:#666;">Storage Snapshot</span>
<div class="b" style="left:1061.40px;top:510.80px;width:11.2px;height:11.2px;border-radius:50%;background:#dc6463;"></div>
<span class="t" style="left:1079.40px;top:512.00px;font-size:11.1px;line-height:11.1px;color:#666;">Data Transfer</span>
<div class="b" style="left:1061.40px;top:526.90px;width:11.2px;height:11.2px;border-radius:50%;background:#8c6cc8;"></div>
<span class="t" style="left:1079.40px;top:528.00px;font-size:11.1px;line-height:11.1px;color:#666;">IO</span>
<div class="b" style="left:1061.40px;top:543.00px;width:11.2px;height:11.2px;border-radius:50%;background:#c5d0f8;"></div>
<span class="t" style="left:1079.40px;top:544.00px;font-size:11.1px;line-height:11.1px;color:#666;">Managed Services</span>
<div class="b" style="left:1061.40px;top:559.10px;width:11.2px;height:11.2px;border-radius:50%;background:#a3d9d2;"></div>
<span class="t" style="left:1079.40px;top:560.00px;font-size:11.1px;line-height:11.1px;color:#666;">Network</span>
<div class="b" style="left:1061.40px;top:575.20px;width:11.2px;height:11.2px;border-radius:50%;background:#c8ccd8;"></div>
<span class="t" style="left:1079.40px;top:576.00px;font-size:11.1px;line-height:11.1px;color:#666;">Security</span>
<div class="b" style="left:1061.40px;top:591.30px;width:11.2px;height:11.2px;border-radius:50%;background:#dc6463;"></div>
<span class="t" style="left:1079.40px;top:592.00px;font-size:11.1px;line-height:11.1px;color:#666;">Support</span>
<div class="b" style="left:1194.30px;top:510.80px;width:11.2px;height:11.2px;border-radius:50%;background:#6ccc72;"></div>
<span class="t" style="left:1212.30px;top:512.00px;font-size:11.1px;line-height:11.1px;color:#666;">Database Units</span>
<div class="b" style="left:1194.30px;top:526.90px;width:11.2px;height:11.2px;border-radius:50%;background:#f0919f;"></div>
<span class="t" style="left:1212.30px;top:528.00px;font-size:11.1px;line-height:11.1px;color:#666;">Instance Usage</span>
<div class="b" style="left:1194.30px;top:543.00px;width:11.2px;height:11.2px;border-radius:50%;background:#f8d9c2;"></div>
<span class="t" style="left:1212.30px;top:544.00px;font-size:11.1px;line-height:11.1px;color:#666;">Memory Duration</span>
<div class="b" style="left:1194.30px;top:559.10px;width:11.2px;height:11.2px;border-radius:50%;background:#f8e5aa;"></div>
<span class="t" style="left:1212.30px;top:560.00px;font-size:11.1px;line-height:11.1px;color:#666;">Network Gateway</span>
<div class="b" style="left:1194.30px;top:575.20px;width:11.2px;height:11.2px;border-radius:50%;background:#bfe2f2;"></div>
<span class="t" style="left:1212.30px;top:576.00px;font-size:11.1px;line-height:11.1px;color:#666;">Storage</span>
<div class="b" style="left:1194.30px;top:591.30px;width:11.2px;height:11.2px;border-radius:50%;background:#6ccc72;"></div>
<span class="t" style="left:1212.30px;top:592.00px;font-size:11.1px;line-height:11.1px;color:#666;">VPN</span>
<div class="card" style="left:65.5px;top:662.6px;width:327px;height:295px;border-radius:7px 7px 0 0;"></div>
<span class="t" style="left:75.23px;top:674.00px;font-size:12.3px;line-height:12.3px;color:#83919c;font-weight:700;transform:scaleX(0.9593);">MONTHLY ESTIMATED SPEND - COST (AMORT...</span>
<span class="t" style="left:75.76px;top:687.00px;font-size:12px;line-height:12px;color:#a1adb6;letter-spacing:0.117px;">This Month &amp; Last Month</span>
<div class="b" style="left:65.5px;top:702.9px;width:327px;height:1px;background:#eef0f0;"></div>
<svg style="left:361px;top:682px" width="18" height="18" viewBox="0 0 18 18"><circle cx="9" cy="9" r="7.6" fill="none" stroke="#f3c73c" stroke-width="1.3"/><path d="M9 4.6 V10" stroke="#f3c73c" stroke-width="1.4"/><circle cx="9" cy="12.6" r="0.9" fill="#f3c73c"/></svg>
<span class="t" style="left:124.41px;top:844.00px;font-size:20px;line-height:20px;color:#668ef0;transform:scaleX(0.9743);">$11,193,068.47</span>
<div class="b" style="left:268.1px;top:846.1px;width:56.6px;height:15.3px;background:#d8dde1;border-radius:4px;"></div>
<span class="t" style="left:274.24px;top:850.00px;font-size:9px;line-height:9px;color:#fff;transform:scaleX(0.9863);">-12.57%</span>
<svg style="left:311.2px;top:849px" width="9" height="10" viewBox="0 0 9 10"><path d="M4.5 0.8 V8 M1.2 5 L4.5 8.4 L7.8 5" fill="none" stroke="#fff" stroke-width="1.8"/></svg>
<span class="t" style="left:162.51px;top:864.00px;font-size:19.2px;line-height:19.2px;color:#f0a35e;letter-spacing:0.032px;">$12,802,874.38</span>
<div class="card" style="left:420px;top:662.6px;width:327px;height:295px;border-radius:7px 7px 0 0;"></div>
<span class="t" style="left:430.22px;top:674.00px;font-size:12.3px;line-height:12.3px;color:#83919c;font-weight:700;transform:scaleX(0.9101);">SPEND BY COST CENTRE (CHARGEBACK)</span>
<span class="t" style="left:429.54px;top:687.00px;font-size:12px;line-height:12px;color:#a1adb6;letter-spacing:0.260px;">Last Month</span>
<div class="b" style="left:420px;top:702.9px;width:327px;height:1px;background:#eef0f0;"></div>
<svg style="left:0;top:0" width="1480" height="987"><path d="M583.5,835.5 L583.50,724.50 A111,111 0 1 1 491.69,897.89 Z" fill="#668ef0" stroke="#fff" stroke-width="1" stroke-linejoin="round"/><path d="M583.5,835.5 L491.69,897.89 A111,111 0 0 1 480.29,794.64 Z" fill="#f0a35e" stroke="#fff" stroke-width="1" stroke-linejoin="round"/><path d="M583.5,835.5 L480.29,794.64 A111,111 0 0 1 527.60,739.60 Z" fill="#dc6463" stroke="#fff" stroke-width="1" stroke-linejoin="round"/><path d="M583.5,835.5 L527.60,739.60 A111,111 0 0 1 583.50,724.50 Z" fill="#6ccc72" stroke="#fff" stroke-width="1" stroke-linejoin="round"/></svg>
<div class="card" style="left:774px;top:662.7px;width:682px;height:295px;border-radius:7px 7px 0 0;"></div>
<span class="t" style="left:783.75px;top:674.00px;font-size:12.3px;line-height:12.3px;color:#83919c;font-weight:700;transform:scaleX(0.9344);">MY CHARGEBACK SUMMARY (COST CENTER IS ON PNL)</span>
<span class="t" style="left:783.54px;top:687.00px;font-size:12px;line-height:12px;color:#a1adb6;letter-spacing:0.260px;">Last Month</span>
<div class="b" style="left:774px;top:703.0px;width:682px;height:1px;background:#eef0f0;"></div>
<div class="b" style="left:784.8px;top:714.3px;width:661.2px;height:1px;background:#eef0f1;"></div>
<div class="b" style="left:784.8px;top:755.4px;width:478.7px;height:1px;background:#e4e7e9;"></div>
<div class="b" style="left:1263.5px;top:714.7px;width:182.5px;height:39.8px;background:#e5ebfb;"></div>
<div class="b" style="left:1263.5px;top:754.4px;width:182.5px;height:2px;background:#3b63d9;"></div>
<span class="t" style="left:790.19px;top:722.00px;font-size:13.5px;line-height:13.5px;color:#333f4a;font-weight:700;transform:scaleX(0.9536);">Cost</span>
<span class="t" style="left:790.16px;top:737.00px;font-size:13.5px;line-height:13.5px;color:#333f4a;font-weight:700;letter-spacing:0.070px;">Center</span>
<span class="t" style="left:888.18px;top:722.00px;font-size:13.5px;line-height:13.5px;color:#333f4a;font-weight:700;transform:scaleX(0.9291);">Business</span>
<span class="t" style="left:888.19px;top:737.00px;font-size:13.5px;line-height:13.5px;color:#333f4a;font-weight:700;letter-spacing:0.396px;">Unit</span>
<span class="t" style="left:997.47px;top:729.00px;font-size:13.5px;line-height:13.5px;color:#333f4a;font-weight:700;transform:scaleX(0.9909);">Application</span>
<span class="t" style="left:1135.97px;top:722.00px;font-size:13.5px;line-height:13.5px;color:#333f4a;font-weight:700;transform:scaleX(0.9903);">Allocation</span>
<span class="t" style="left:1135.42px;top:737.00px;font-size:13.5px;line-height:13.5px;color:#333f4a;font-weight:700;letter-spacing:0.253px;">Driver</span>
<span class="t" style="left:1332.77px;top:722.00px;font-size:13.5px;line-height:13.5px;color:#3b63d9;font-weight:700;transform:scaleX(0.9729);">Cost (Adjusted</span>
<span class="t" style="left:1355.16px;top:737.00px;font-size:13.5px;line-height:13.5px;color:#3b63d9;font-weight:700;letter-spacing:0.031px;">Amortized)</span>
<svg style="left:869.4px;top:728.4px" width="8" height="12" viewBox="0 0 8 12"><path d="M0 4.6 L4 0.2 L8 4.6 Z" fill="#c9ced3"/><path d="M0 7.4 L4 11.8 L8 7.4 Z" fill="#c9ced3"/></svg>
<svg style="left:977.8px;top:728.4px" width="8" height="12" viewBox="0 0 8 12"><path d="M0 4.6 L4 0.2 L8 4.6 Z" fill="#c9ced3"/><path d="M0 7.4 L4 11.8 L8 7.4 Z" fill="#c9ced3"/></svg>
<svg style="left:1116.5px;top:728.4px" width="8" height="12" viewBox="0 0 8 12"><path d="M0 4.6 L4 0.2 L8 4.6 Z" fill="#c9ced3"/><path d="M0 7.4 L4 11.8 L8 7.4 Z" fill="#c9ced3"/></svg>
<svg style="left:1250.1px;top:728.4px" width="8" height="12" viewBox="0 0 8 12"><path d="M0 4.6 L4 0.2 L8 4.6 Z" fill="#c9ced3"/><path d="M0 7.4 L4 11.8 L8 7.4 Z" fill="#c9ced3"/></svg>
<svg style="left:1432.8px;top:728.4px" width="8" height="12" viewBox="0 0 8 12"><path d="M0 4.6 L4 0.2 L8 4.6 Z" fill="#b9c8f5"/><path d="M0 7.4 L4 11.8 L8 7.4 Z" fill="#3b63d9"/></svg>
<div class="b" style="left:784.8px;top:756.4px;width:661.2px;height:45.89999999999998px;background:#fafbfb;"></div>
<div class="b" style="left:784.8px;top:802.3px;width:661.2px;height:1px;background:#eef0f1;"></div>
<span class="t" style="left:789.73px;top:769.00px;font-size:12.5px;line-height:12.5px;color:#333b42;transform:scaleX(0.9426);">media</span>
<span class="t" style="left:888.50px;top:769.00px;font-size:12.5px;line-height:12.5px;color:#333b42;letter-spacing:0.004px;">digital</span>
<span class="t" style="left:997.86px;top:769.00px;font-size:12.5px;line-height:12.5px;color:#333b42;transform:scaleX(0.9733);">web</span>
<span class="t" style="left:1135.82px;top:769.00px;font-size:12.5px;line-height:12.5px;color:#333b42;transform:scaleX(0.9560);">application resource</span>
<span class="t" style="left:1136.12px;top:781.00px;font-size:12.5px;line-height:12.5px;color:#333b42;transform:scaleX(0.9612);">tag</span>
<span class="t" style="left:1361.38px;top:769.00px;font-size:12.5px;line-height:12.5px;color:#20262b;font-weight:700;transform:scaleX(0.9827);">$1,825,187.00</span>
<div class="b" style="left:784.8px;top:836.3px;width:661.2px;height:1px;background:#eef0f1;"></div>
<span class="t" style="left:789.73px;top:816.00px;font-size:12.5px;line-height:12.5px;color:#333b42;transform:scaleX(0.9426);">media</span>
<span class="t" style="left:888.25px;top:816.00px;font-size:12.5px;line-height:12.5px;color:#333b42;transform:scaleX(0.9242);">magazines</span>
<span class="t" style="left:997.32px;top:816.00px;font-size:12.5px;line-height:12.5px;color:#333b42;transform:scaleX(0.9611);">content manager</span>
<span class="t" style="left:1135.82px;top:816.00px;font-size:12.5px;line-height:12.5px;color:#333b42;transform:scaleX(0.9562);">azure subscription</span>
<span class="t" style="left:1360.88px;top:816.00px;font-size:12.5px;line-height:12.5px;color:#20262b;font-weight:700;transform:scaleX(0.9836);">$1,438,997.64</span>
<div class="b" style="left:784.8px;top:837.3px;width:661.2px;height:45.200000000000045px;background:#fafbfb;"></div>
<div class="b" style="left:784.8px;top:882.5px;width:661.2px;height:1px;background:#eef0f1;"></div>
<span class="t" style="left:789.77px;top:850.00px;font-size:12.5px;line-height:12.5px;color:#333b42;transform:scaleX(0.9722);">unallocated</span>
<span class="t" style="left:888.25px;top:850.00px;font-size:12.5px;line-height:12.5px;color:#333b42;letter-spacing:0.017px;">unknown</span>
<span class="t" style="left:997.61px;top:850.00px;font-size:12.5px;line-height:12.5px;color:#333b42;transform:scaleX(0.9875);">testnox</span>
<span class="t" style="left:1135.82px;top:850.00px;font-size:12.5px;line-height:12.5px;color:#333b42;transform:scaleX(0.9560);">application resource</span>
<span class="t" style="left:1136.12px;top:862.00px;font-size:12.5px;line-height:12.5px;color:#333b42;transform:scaleX(0.9612);">tag</span>
<span class="t" style="left:1360.88px;top:850.00px;font-size:12.5px;line-height:12.5px;color:#20262b;font-weight:700;transform:scaleX(0.9898);">$1,270,233.47</span>
<div class="b" style="left:784.8px;top:928.8px;width:661.2px;height:1px;background:#eef0f1;"></div>
<span class="t" style="left:789.73px;top:896.00px;font-size:12.5px;line-height:12.5px;color:#333b42;transform:scaleX(0.9426);">media</span>
<span class="t" style="left:888.82px;top:896.00px;font-size:12.5px;line-height:12.5px;color:#333b42;transform:scaleX(0.9709);">television</span>
<span class="t" style="left:997.86px;top:896.00px;font-size:12.5px;line-height:12.5px;color:#333b42;transform:scaleX(0.9583);">web-cache</span>
<span class="t" style="left:1135.82px;top:896.00px;font-size:12.5px;line-height:12.5px;color:#333b42;transform:scaleX(0.9560);">application resource</span>
<span class="t" style="left:1136.12px;top:908.00px;font-size:12.5px;line-height:12.5px;color:#333b42;transform:scaleX(0.9612);">tag</span>
<span class="t" style="left:1370.98px;top:896.00px;font-size:12.5px;line-height:12.5px;color:#20262b;font-weight:700;transform:scaleX(0.9922);">$878,167.02</span>
<div class="b" style="left:784.8px;top:929.8px;width:661.2px;height:27.200000000000045px;background:#fafbfb;"></div>
<span class="t" style="left:789.73px;top:943.00px;font-size:12.5px;line-height:12.5px;color:#333b42;transform:scaleX(0.9426);">media</span>
<span class="t" style="left:888.82px;top:943.00px;font-size:12.5px;line-height:12.5px;color:#333b42;transform:scaleX(0.9709);">television</span>
<span class="t" style="left:997.49px;top:943.00px;font-size:12.5px;line-height:12.5px;color:#333b42;transform:scaleX(0.9775);">static app</span>
<span class="t" style="left:1135.82px;top:943.00px;font-size:12.5px;line-height:12.5px;color:#333b42;transform:scaleX(0.9560);">application resource</span>
<span class="t" style="left:1370.98px;top:943.00px;font-size:12.5px;line-height:12.5px;color:#20262b;font-weight:700;transform:scaleX(0.9922);">$822,738.06</span>
<div class="b" style="left:0px;top:957px;width:1480px;height:30px;background:#fff;"></div>
<div class="b" style="left:1047px;top:79px;width:261.5px;height:302.5px;background:#fff;border:1px solid #d2d8dc;border-radius:7px;box-shadow:1px 2px 2px rgba(40,50,60,0.07);"></div>
<div class="b" style="left:1054.2px;top:86.5px;width:248px;height:31.5px;background:#fff;border:1.3px solid #4f78e0;border-radius:6px;box-shadow:0 0 0 1.5px rgba(90,130,240,0.22);"></div>
<span class="t" style="left:1061.29px;top:96.00px;font-size:15px;line-height:15px;color:#1d1d1d;transform:scaleX(0.9262);">team</span>
<div class="b" style="left:1092.0px;top:93.8px;width:1px;height:19.2px;background:#777;"></div>
<svg style="left:1279px;top:92px" width="18" height="16" viewBox="0 0 18 16"><circle cx="7.2" cy="7.2" r="5.8" fill="none" stroke="#2d5bd8" stroke-width="1.7"/><path d="M11.4 11.4 L16 15" stroke="#2d5bd8" stroke-width="1.7" stroke-linecap="round"/></svg>
<span class="t" style="left:1053.93px;top:135.00px;font-size:11.3px;line-height:11.3px;color:#7d8c97;font-weight:700;transform:scaleX(0.9427);">SHARED VIEWS</span>
<div class="b" style="left:1054.1px;top:219.2px;width:247.8px;height:29.6px;background:#dbe5fd;border-radius:2px;"></div>
<span class="t" style="left:1064.77px;top:163.00px;font-size:14px;line-height:14px;color:#2f3d49;font-weight:700;transform:scaleX(0.9398);">Team</span>
<span class="t" style="left:1097.74px;top:163.00px;font-size:14px;line-height:14px;color:#2f3d49;">:</span>
<span class="t" style="left:1105.20px;top:163.00px;font-size:14px;line-height:14px;color:#2f3d49;letter-spacing:0.250px;">All</span>
<span class="t" style="left:1064.77px;top:195.00px;font-size:14px;line-height:14px;color:#2f3d49;font-weight:700;transform:scaleX(0.9398);">Team</span>
<span class="t" style="left:1097.74px;top:195.00px;font-size:14px;line-height:14px;color:#2f3d49;">:</span>
<span class="t" style="left:1105.20px;top:195.00px;font-size:14px;line-height:14px;color:#2f3d49;letter-spacing:0.261px;">Auditing</span>
<span class="t" style="left:1064.77px;top:227.00px;font-size:14px;line-height:14px;color:#3b63d9;font-weight:700;transform:scaleX(0.9398);">Team</span>
<span class="t" style="left:1097.74px;top:227.00px;font-size:14px;line-height:14px;color:#3b63d9;">:</span>
<span class="t" style="left:1104.13px;top:227.00px;font-size:14px;line-height:14px;color:#3b63d9;transform:scaleX(0.9584);">Buzz Logic</span>
<span class="t" style="left:1064.77px;top:260.00px;font-size:14px;line-height:14px;color:#2f3d49;font-weight:700;transform:scaleX(0.9398);">Team</span>
<span class="t" style="left:1097.74px;top:260.00px;font-size:14px;line-height:14px;color:#2f3d49;">:</span>
<span class="t" style="left:1104.54px;top:260.00px;font-size:14px;line-height:14px;color:#2f3d49;transform:scaleX(0.9430);">CCOE</span>
<span class="t" style="left:1064.77px;top:292.00px;font-size:14px;line-height:14px;color:#2f3d49;font-weight:700;transform:scaleX(0.9398);">Team</span>
<span class="t" style="left:1097.74px;top:292.00px;font-size:14px;line-height:14px;color:#2f3d49;">:</span>
<span class="t" style="left:1104.50px;top:292.00px;font-size:14px;line-height:14px;color:#2f3d49;">Complaints</span>
<span class="t" style="left:1064.77px;top:324.00px;font-size:14px;line-height:14px;color:#2f3d49;font-weight:700;transform:scaleX(0.9398);">Team</span>
<span class="t" style="left:1097.74px;top:324.00px;font-size:14px;line-height:14px;color:#2f3d49;">:</span>
<span class="t" style="left:1104.11px;top:324.00px;font-size:14px;line-height:14px;color:#2f3d49;transform:scaleX(0.9700);">Data Science</span>
<span class="t" style="left:1064.77px;top:356.00px;font-size:14px;line-height:14px;color:#2f3d49;font-weight:700;transform:scaleX(0.9398);">Team</span>
<span class="t" style="left:1097.74px;top:356.00px;font-size:14px;line-height:14px;color:#2f3d49;">:</span>
<span class="t" style="left:1104.08px;top:356.00px;font-size:14px;line-height:14px;color:#2f3d49;letter-spacing:0.314px;">Morphius</span>
</body></html>
